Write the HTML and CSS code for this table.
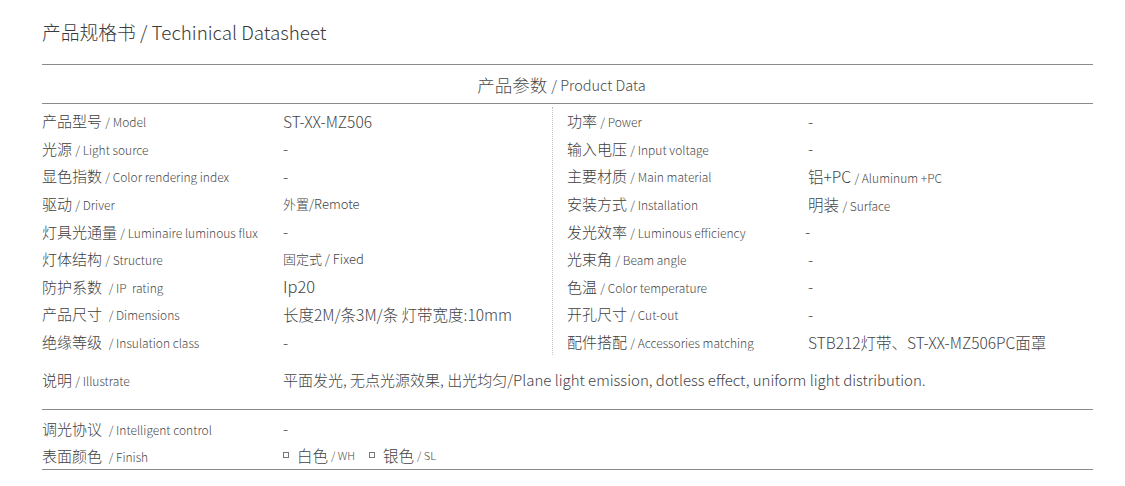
FILE: index.html
```html
<!DOCTYPE html>
<html lang="zh">
<head>
<meta charset="utf-8">
<title>产品规格书</title>
<link rel="stylesheet" href="styles.css">
</head>
<body>
<div class="sheet">
  <div class="title">产品规格书 / Techinical Datasheet</div>
  <div class="section-head"><span class="cn">产品参数</span> <span class="en">/ Product Data</span></div>

  <div class="specs">
    <div class="col left">
      <div class="row"><div class="label">产品型号 <span class="en">/ Model</span></div><div class="val">ST-XX-MZ506</div></div>
      <div class="row"><div class="label">光源 <span class="en">/ Light source</span></div><div class="val">-</div></div>
      <div class="row"><div class="label">显色指数 <span class="en">/ Color rendering index</span></div><div class="val">-</div></div>
      <div class="row"><div class="label">驱动 <span class="en">/ Driver</span></div><div class="val small">外置/Remote</div></div>
      <div class="row"><div class="label">灯具光通量 <span class="en">/ Luminaire luminous flux</span></div><div class="val">-</div></div>
      <div class="row"><div class="label">灯体结构 <span class="en">/ Structure</span></div><div class="val small">固定式 / Fixed</div></div>
      <div class="row"><div class="label">防护系数&nbsp; <span class="en">/ IP&nbsp; rating</span></div><div class="val big">Ip20</div></div>
      <div class="row"><div class="label">产品尺寸&nbsp; <span class="en">/ Dimensions</span></div><div class="val">长度2M/条3M/条 灯带宽度:10mm</div></div>
      <div class="row"><div class="label">绝缘等级&nbsp; <span class="en">/ Insulation class</span></div><div class="val">-</div></div>
    </div>
    <div class="col right">
      <div class="row"><div class="label">功率 <span class="en">/ Power</span></div><div class="val">-</div></div>
      <div class="row"><div class="label">输入电压 <span class="en">/ Input voltage</span></div><div class="val">-</div></div>
      <div class="row"><div class="label">主要材质 <span class="en">/ Main material</span></div><div class="val">铝+PC <span class="en">/ Aluminum +PC</span></div></div>
      <div class="row"><div class="label">安装方式 <span class="en">/ Installation</span></div><div class="val">明装 <span class="en">/ Surface</span></div></div>
      <div class="row"><div class="label">发光效率 <span class="en">/ Luminous efficiency</span></div><div class="val shift">-</div></div>
      <div class="row"><div class="label">光束角 <span class="en">/ Beam angle</span></div><div class="val">-</div></div>
      <div class="row"><div class="label">色温 <span class="en">/ Color temperature</span></div><div class="val">-</div></div>
      <div class="row"><div class="label">开孔尺寸 <span class="en">/ Cut-out</span></div><div class="val">-</div></div>
      <div class="row"><div class="label">配件搭配 <span class="en">/ Accessories matching</span></div><div class="val">STB212灯带、ST-XX-MZ506PC面罩</div></div>
    </div>
  </div>

  <div class="desc">
    <div class="label">说明 <span class="en">/ Illustrate</span></div>
    <div class="val desc-text">平面发光, 无点光源效果, 出光均匀/Plane light emission, dotless effect, uniform light distribution.</div>
  </div>

  <div class="extra">
    <div class="row"><div class="label">调光协议&nbsp; <span class="en">/ Intelligent control</span></div><div class="val">-</div></div>
    <div class="row last"><div class="label">表面颜色&nbsp; <span class="en">/ Finish</span></div>
      <div class="val finish">
        <span class="opt"><span class="box"></span>白色 <span class="en tiny">/ WH</span></span>
        <span class="opt"><span class="box"></span>银色 <span class="en tiny">/ SL</span></span>
      </div>
    </div>
  </div>
</div>
</body>
</html>
```

FILE: styles.css
```css
* { box-sizing: border-box; margin: 0; padding: 0; }

body {
  background: #fff;
  font-family: "Noto Sans CJK SC", "Noto Sans", sans-serif;
  font-weight: 300;
  color: #444;
}

.sheet {
  width: 1051px;
  margin-left: 42px;
}

.title {
  height: 65px;
  display: flex;
  align-items: center;
  font-size: 18.8px;
  color: #3a3a3a;
  border-bottom: 1px solid #8a8a8a;
  padding-bottom: 1px;
}

.section-head {
  height: 39px;
  display: flex;
  align-items: center;
  justify-content: center;
  border-bottom: 1px solid #8a8a8a;
  color: #4a4a4a;
  gap: 4px;
  padding-right: 12px;
}
.section-head .cn { font-size: 17.5px; }
.section-head .en { font-size: 14.5px; color: #4a4a4a; }

.en { font-size: 12px; color: #4a4a4a; }

.specs {
  display: grid;
  grid-template-columns: 510px 1fr;
  padding-top: 3px;
}

.col.right {
  border-left: 1px dotted #c4c4c4;
  padding-left: 14px;
}

.row {
  display: grid;
  grid-template-columns: 241px 1fr;
  align-items: center;
  height: 27.6px;
  white-space: nowrap;
}

.label { font-size: 15px; color: #404040; }

.val { font-size: 15.5px; color: #444; }
.val.small { font-size: 13px; }
.val.big { font-size: 16.5px; }
.val.shift { margin-left: -3px; }

.desc {
  display: grid;
  grid-template-columns: 241px 1fr;
  align-items: center;
  height: 55px;
  padding-bottom: 6px;
  border-bottom: 1px solid #8a8a8a;
}
.desc-text { font-size: 15px; }

.extra {
  padding-top: 4px;
  border-bottom: 1px solid #8a8a8a;
}
.extra .row.last { height: 27px; }

.finish {
  display: flex;
  align-items: center;
  gap: 14px;
}
.opt {
  display: inline-flex;
  align-items: center;
}
.box {
  display: inline-block;
  width: 6px;
  height: 6px;
  border: 1px solid #777;
  margin-right: 8px;
}
.tiny { font-size: 11px; margin-left: 3px; }
```
